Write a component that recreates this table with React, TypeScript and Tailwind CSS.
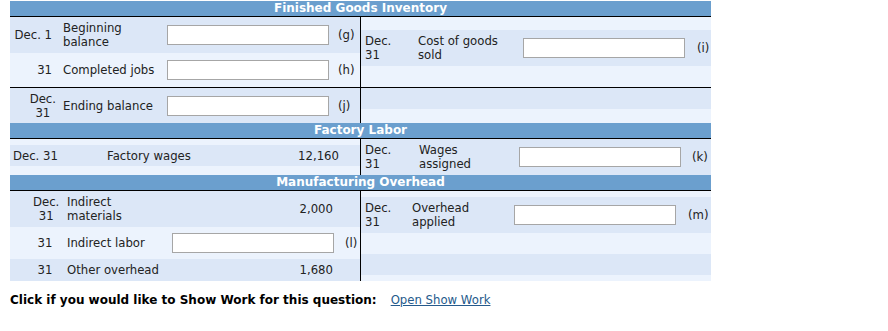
import React from 'react'

// Shared cell colours for the T-account rows
const DARK = 'bg-[#dce7f7]'
const LIGHT = 'bg-[#ecf3fd]'

function SectionHeader({ title }: { title: string }) {
  return (
    <div className="h-[16px] bg-[#6b9fce] border-b border-black text-center text-[12px] leading-[15px] font-bold text-white">
      {title}
    </div>
  )
}

function AmountField() {
  return <input type="text" className="w-[162px] h-[20px] border border-[#a6a6a6] bg-white outline-none" />
}

// Two-line "Dec. / 31" date, centred on itself
function StackedDate() {
  return (
    <span className="inline-block text-center">
      Dec.
      <br />
      31
    </span>
  )
}

function Divider() {
  return <div className="w-px bg-black" />
}

function FinishedGoods() {
  return (
    <>
      <SectionHeader title="Finished Goods Inventory" />
      <div className="flex h-[71px] border-b border-black">
        <div className="w-[350px] flex flex-col">
          <div className={`flex items-center h-[36px] ${DARK}`}>
            <div className="w-[46px] pr-[4px] text-right">Dec. 1</div>
            <div className="w-[111px] pl-[7px]">
              Beginning
              <br />
              balance
            </div>
            <AmountField />
            <div className="pl-[9px]">(g)</div>
          </div>
          <div className={`flex items-center flex-1 ${LIGHT}`}>
            <div className="w-[46px] pr-[4px] text-right">31</div>
            <div className="w-[111px] pl-[7px]">Completed jobs</div>
            <AmountField />
            <div className="pl-[9px]">(h)</div>
          </div>
        </div>
        <Divider />
        <div className="flex-1 flex flex-col">
          <div className={`h-[13px] ${LIGHT}`} />
          <div className={`flex items-center h-[36px] ${DARK}`}>
            <div className="w-[57px] pl-[4px]">
              Dec.
              <br />
              31
            </div>
            <div className="w-[105px]">
              Cost of goods
              <br />
              sold
            </div>
            <AmountField />
            <div className="pl-[12px]">(i)</div>
          </div>
          <div className={`flex-1 ${LIGHT}`} />
        </div>
      </div>
      <div className="flex h-[35px]">
        <div className={`w-[350px] flex items-center ${DARK}`}>
          <div className="w-[46px] text-right">
            <StackedDate />
          </div>
          <div className="w-[111px] pl-[7px]">Ending balance</div>
          <AmountField />
          <div className="pl-[9px]">(j)</div>
        </div>
        <Divider />
        <div className="flex-1 flex flex-col">
          <div className={`h-[21px] ${DARK}`} />
          <div className={`flex-1 ${LIGHT}`} />
        </div>
      </div>
    </>
  )
}

function FactoryLabor() {
  return (
    <>
      <SectionHeader title="Factory Labor" />
      <div className="flex h-[36px]">
        <div className="w-[350px] flex flex-col">
          <div className={`h-[6px] ${LIGHT}`} />
          <div className={`flex items-center h-[21px] ${DARK}`}>
            <div className="w-[97px] pl-[3px]">Dec. 31</div>
            <div className="w-[150px]">Factory wages</div>
            <div className="w-[82px] text-right">12,160</div>
          </div>
          <div className={`flex-1 ${LIGHT}`} />
        </div>
        <Divider />
        <div className={`flex-1 flex items-center ${DARK}`}>
          <div className="w-[58px] pl-[4px]">
            Dec.
            <br />
            31
          </div>
          <div className="w-[100px]">
            Wages
            <br />
            assigned
          </div>
          <AmountField />
          <div className="pl-[11px]">(k)</div>
        </div>
      </div>
    </>
  )
}

function ManufacturingOverhead() {
  return (
    <>
      <SectionHeader title="Manufacturing Overhead" />
      <div className="flex h-[90px]">
        <div className="w-[350px] flex flex-col">
          <div className={`flex items-center h-[36px] ${DARK}`}>
            <div className="w-[56px] pl-[23px] pr-[9px] text-center">
              <StackedDate />
            </div>
            <div className="w-[106px] pl-[1px]">
              Indirect
              <br />
              materials
            </div>
            <div className="w-[162px] pr-[1px] text-right">2,000</div>
          </div>
          <div className={`flex items-center h-[32px] ${LIGHT}`}>
            <div className="w-[56px] pl-[23px] pr-[9px] text-center">31</div>
            <div className="w-[106px] pl-[1px]">Indirect labor</div>
            <AmountField />
            <div className="pl-[11px]">(l)</div>
          </div>
          <div className={`flex items-center flex-1 ${DARK}`}>
            <div className="w-[56px] pl-[23px] pr-[9px] text-center">31</div>
            <div className="w-[106px] pl-[1px]">Other overhead</div>
            <div className="w-[162px] pr-[1px] text-right">1,680</div>
          </div>
        </div>
        <Divider />
        <div className="flex-1 flex flex-col">
          <div className={`h-[6px] ${LIGHT}`} />
          <div className={`flex items-center h-[36px] ${DARK}`}>
            <div className="w-[51px] pl-[4px]">
              Dec.
              <br />
              31
            </div>
            <div className="w-[102px]">
              Overhead
              <br />
              applied
            </div>
            <AmountField />
            <div className="pl-[12px]">(m)</div>
          </div>
          <div className={`h-[21px] ${LIGHT}`} />
          <div className={`h-[21px] ${DARK}`} />
          <div className={`flex-1 ${LIGHT}`} />
        </div>
      </div>
    </>
  )
}

export default function App() {
  return (
    <div className="min-h-screen bg-white pt-[1px] pl-[10px] font-['DejaVu_Sans',Verdana,sans-serif] text-[11.7px] leading-[14px] text-[#222]">
      <div className={`w-[701px] ${LIGHT}`}>
        <FinishedGoods />
        <FactoryLabor />
        <ManufacturingOverhead />
      </div>
      <div className="mt-[12px] flex items-center">
        <span className="font-bold text-[12px] text-black">Click if you would like to Show Work for this question:</span>
        <a href="#" className="ml-[14px] text-[#255a8c] underline">
          Open Show Work
        </a>
      </div>
    </div>
  )
}
